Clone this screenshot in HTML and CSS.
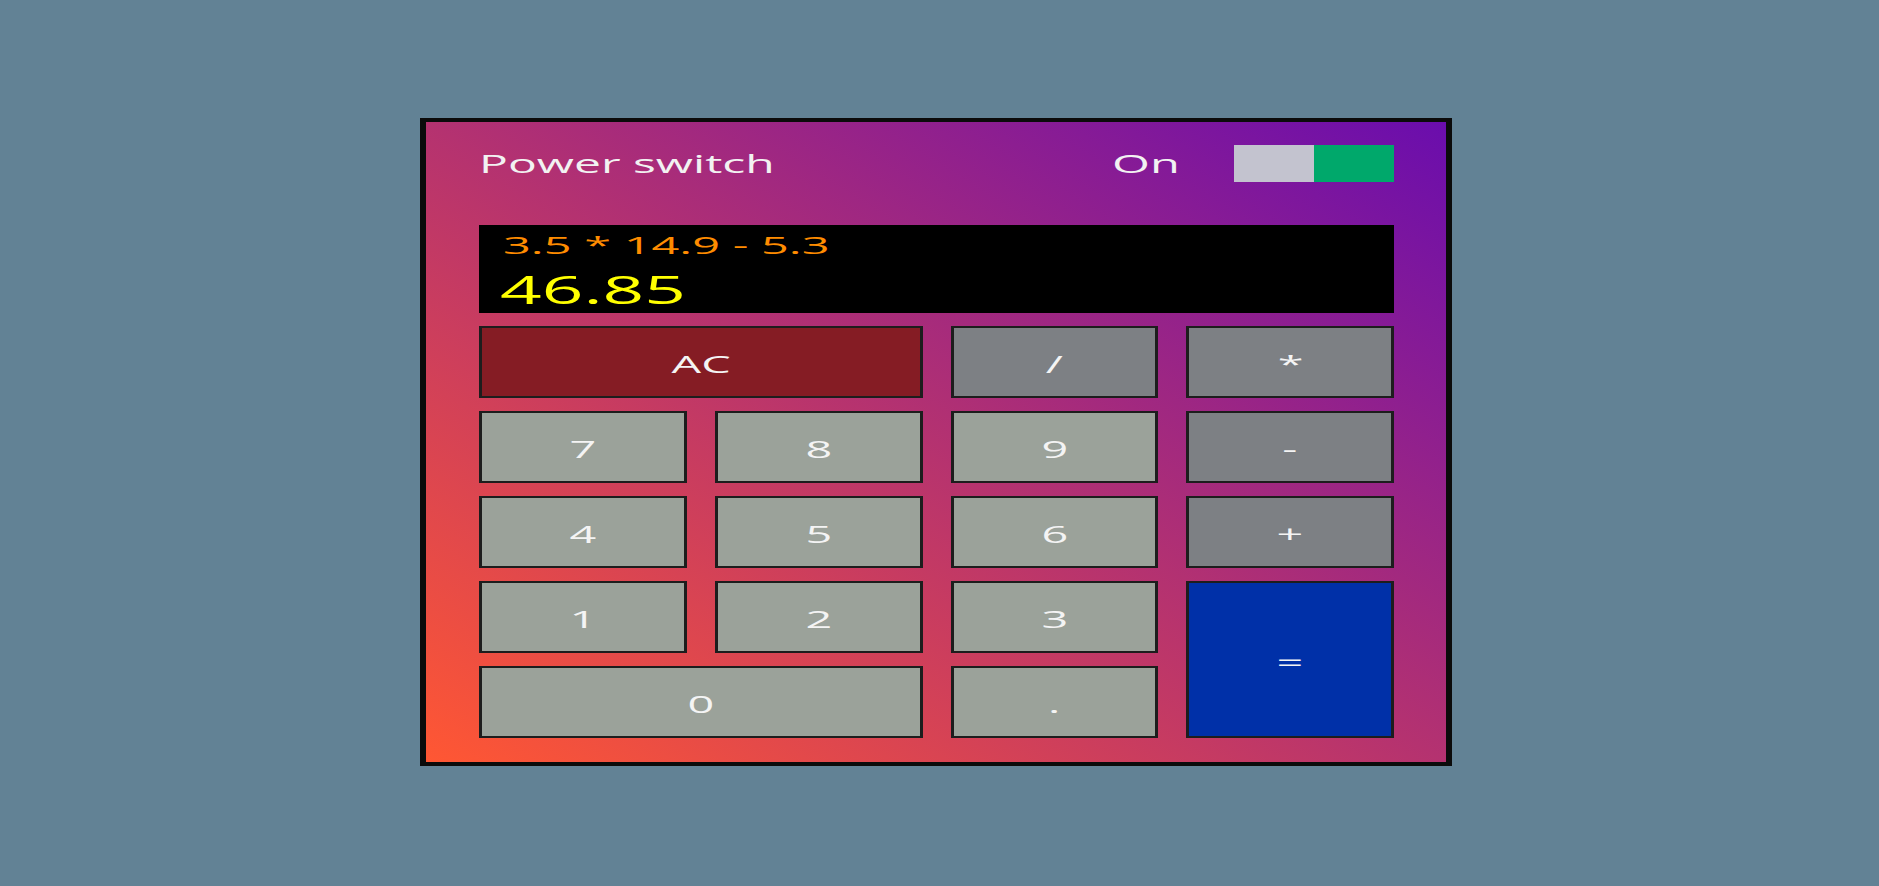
FILE: index.html
```html
<!DOCTYPE html>
<html lang="en">
<head>
<meta charset="utf-8">
<title>Calculator</title>
<link rel="stylesheet" href="styles.css">
</head>
<body>
<div class="window">
  <div class="header">
    <span class="title"><span class="sx sx-left">Power switch</span></span>
    <span class="state"><span class="sx sx-right">On</span></span>
    <div class="toggle"><div class="toggle-off"></div><div class="toggle-on"></div></div>
  </div>
  <div class="display">
    <div class="expr"><span class="sx sx-left sx-wide">3.5 * 14.9 - 5.3</span></div>
    <div class="result"><span class="sx sx-left">46.85</span></div>
  </div>
  <div class="keys">
    <button class="key clear span2"><span class="sx">AC</span></button>
    <button class="key op"><span class="sx">/</span></button>
    <button class="key op"><span class="sx">*</span></button>
    <button class="key num"><span class="sx">7</span></button>
    <button class="key num"><span class="sx">8</span></button>
    <button class="key num"><span class="sx">9</span></button>
    <button class="key op"><span class="sx">-</span></button>
    <button class="key num"><span class="sx">4</span></button>
    <button class="key num"><span class="sx">5</span></button>
    <button class="key num"><span class="sx">6</span></button>
    <button class="key op"><span class="sx">+</span></button>
    <button class="key num"><span class="sx">1</span></button>
    <button class="key num"><span class="sx">2</span></button>
    <button class="key num"><span class="sx">3</span></button>
    <button class="key equals"><span class="sx">=</span></button>
    <button class="key num span2"><span class="sx">0</span></button>
    <button class="key num"><span class="sx">.</span></button>
  </div>
</div>
</body>
</html>
```
FILE: styles.css
```css
html, body {
  margin: 0;
  padding: 0;
  height: 100%;
}
body {
  background: #628295;
  display: flex;
  align-items: center;
  justify-content: center;
  font-family: "Open Sans", "Noto Sans", sans-serif;
  color: #f2f2f2;
}
.window {
  box-sizing: border-box;
  width: 1032px;
  height: 648px;
  margin: 0 7px 2px 0;
  border-style: solid;
  border-color: #0b0b0b;
  border-width: 4px 6px;
  background: linear-gradient(to top right, #ff5733, #6a0dad);
  padding: 23px 52px 24px 53px;
  display: flex;
  flex-direction: column;
}
.sx {
  display: inline-block;
  transform: scaleX(1.95);
  transform-origin: center;
  white-space: pre;
}
.sx-left { transform-origin: left center; }
.sx-right { transform-origin: right center; }
.sx-wide { transform: scaleX(2.03); }
.header {
  height: 37px;
  display: flex;
  align-items: center;
}
.title {
  font-size: 25px;
  line-height: 25px;
  flex: 1;
}
.title .sx { transform: scaleX(1.92); }
.state {
  font-size: 25px;
  line-height: 25px;
  margin-right: 54px;
}
.toggle {
  width: 160px;
  height: 37px;
  display: flex;
}
.toggle-off { flex: 1; background: #c3c3cf; }
.toggle-on { flex: 1; background: #00a86b; }
.display {
  margin-top: 43px;
  height: 88px;
  box-sizing: border-box;
  background: #000;
  padding: 8px 0 0 24px;
}
.expr {
  color: #ff8c00;
  font-size: 24px;
  line-height: 24px;
}
.result {
  color: #ffff00;
  font-size: 38px;
  line-height: 38px;
  margin-top: 13px;
  margin-left: -3px;
}
.result .sx { transform: scaleX(1.92); }
.keys {
  margin-top: 13px;
  display: grid;
  grid-template-columns: repeat(4, 1fr);
  grid-template-rows: repeat(5, 72px);
  column-gap: 28px;
  row-gap: 13px;
}
.key {
  box-sizing: border-box;
  margin: 0;
  border-style: solid;
  border-color: #1d1d1d;
  border-width: 2px 3px;
  font-family: inherit;
  font-size: 24px;
  line-height: 24px;
  color: #f4f4f4;
  padding: 4px 0 0 0;
  display: flex;
  align-items: center;
  justify-content: center;
}
.span2 { grid-column: span 2; }
.num { background: #9ba29a; }
.op { background: #7d8084; }
.clear { background: #851c24; }
.equals {
  background: #0030a8;
  grid-column: 4;
  grid-row: 4 / span 2;
}
```
